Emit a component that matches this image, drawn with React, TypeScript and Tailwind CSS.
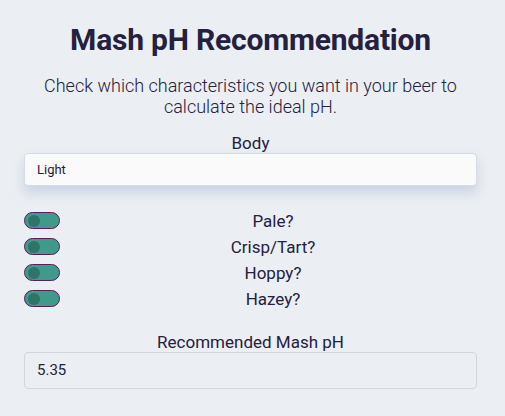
import React, { useState } from "react";

const traits = ["Pale?", "Crisp/Tart?", "Hoppy?", "Hazey?"];

function Toggle({ on, onClick }: { on: boolean; onClick: () => void }) {
  return (
    <button
      onClick={onClick}
      className="relative w-[36px] h-[17px] shrink-0 rounded-full border border-[#5c1b5e] bg-[#3f9a8b]"
    >
      <span
        className={`absolute top-[1.5px] w-[12px] h-[12px] rounded-full bg-[#2f7467] ${on ? "right-[3px]" : "left-[3px]"}`}
      />
    </button>
  );
}

export default function App() {
  const [checked, setChecked] = useState<boolean[]>([false, false, false, false]);

  return (
    <div className="min-h-[416px] w-full bg-[#ebeef2] text-[#242040] font-['Roboto',sans-serif] pl-[24px] pr-[28px] pt-[20px]">
      <h1 className="text-center text-[30px] font-bold leading-[40px] tracking-[-0.2px]">
        Mash pH Recommendation
      </h1>

      <p className="mt-[15px] text-center text-[18px] font-light leading-[21px]">
        Check which characteristics you want in your beer to
        <br />
        calculate the ideal pH.
      </p>

      {/* Body select */}
      <div className="mt-[16px] flex flex-col">
        <label className="text-center text-[17px] leading-[20px]">Body</label>
        <div className="h-[33px] rounded-[4px] border border-[#d7dbe3] bg-[#fafafa] px-[12px] flex items-center text-[13px] shadow-[0_7px_12px_rgba(120,140,190,0.28)]">
          Light
        </div>
      </div>

      {/* Toggles */}
      <div className="mt-[26px] flex flex-col gap-[9px]">
        {traits.map((t, i) => (
          <div key={t} className="flex items-center h-[17px]">
            <Toggle
              on={checked[i]}
              onClick={() =>
                setChecked((c) => c.map((v, j) => (j === i ? !v : v)))
              }
            />
            <span className="flex-1 ml-[9px] text-center text-[17px] leading-[20px]">{t}</span>
          </div>
        ))}
      </div>

      {/* Result */}
      <div className="mt-[25px] flex flex-col">
        <label className="text-center text-[17px] leading-[20px]">Recommended Mash pH</label>
        <div className="h-[37px] rounded-[4px] border border-[#d3d6dc] px-[12px] flex items-center text-[15px]">
          5.35
        </div>
      </div>
    </div>
  );
}
